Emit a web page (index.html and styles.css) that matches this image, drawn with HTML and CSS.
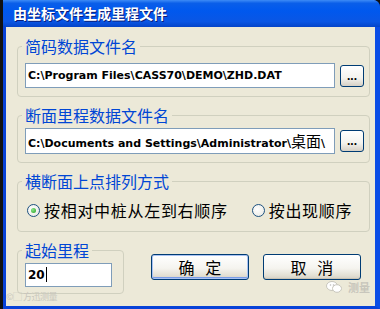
FILE: index.html
```html
<!DOCTYPE html>
<html lang="zh-CN">
<head>
  <meta charset="UTF-8" />
  <title>由坐标文件生成里程文件</title>
  <link rel="stylesheet" href="styles.css">
</head>
<body>

  <div class="window">
    <div class="titlebar">由坐标文件生成里程文件</div>

    <div class="content">
      <fieldset class="group g1">
        <legend>简码数据文件名</legend>
        <div class="file-row">
          <div class="field">C:\Program Files\CASS70\DEMO\ZHD.DAT</div>
          <button class="browse">...</button>
        </div>
      </fieldset>

      <fieldset class="group g2">
        <legend>断面里程数据文件名</legend>
        <div class="file-row">
          <div class="field">C:\Documents and Settings\Administrator\<span class="cjk">桌面</span>\</div>
          <button class="browse">...</button>
        </div>
      </fieldset>

      <fieldset class="group g3">
        <legend>横断面上点排列方式</legend>
        <div class="radios">
          <label class="radio-item"><span class="radio checked"></span>按相对中桩从左到右顺序</label>
          <label class="radio-item"><span class="radio"></span>按出现顺序</label>
        </div>
      </fieldset>

      <div class="bottom-row">
        <fieldset class="group g4">
          <legend>起始里程</legend>
          <div class="field short">20<span class="caret"></span></div>
        </fieldset>
        <button class="btn ok">确&nbsp;&nbsp;&nbsp;定</button>
        <button class="btn cancel">取&nbsp;&nbsp;&nbsp;消</button>
      </div>
    </div>

    <!-- watermarks -->
    <div class="wm-left">©▢ 方迅测量</div>
    <div class="wm-right">
      <svg width="16" height="12" viewBox="0 0 16 12">
        <ellipse cx="6" cy="5" rx="5.5" ry="4.5" fill="#fff" stroke="#c8c6bc" stroke-width="1"/>
        <ellipse cx="11" cy="7.5" rx="4.5" ry="3.8" fill="#fff" stroke="#c8c6bc" stroke-width="1"/>
        <circle cx="4.5" cy="4" r="0.8" fill="#bbb"/>
        <circle cx="7.5" cy="4" r="0.8" fill="#bbb"/>
      </svg>
      <span>测量</span>
    </div>
  </div>

</body>
</html>
```

FILE: styles.css
```css
* { box-sizing: border-box; }

body {
  margin: 0;
  background: #111;
  width: 380px;
  height: 309px;
  overflow: hidden;
}

.window {
  position: relative;
  margin-left: 3px;
  width: 377px;
  height: 309px;
  background: #ece9d8;
  border-left: 3px solid #0842d8;
  border-right: 5px solid #0a4de6;
  border-bottom: 3px solid #0842d8;
  border-top-right-radius: 7px;
  font-family: "Noto Sans CJK SC", "Liberation Sans", sans-serif;
}

.titlebar {
  height: 27px;
  margin-left: -3px;
  margin-right: -5px;
  padding-left: 10px;
  line-height: 27px;
  color: #fff;
  font-size: 14px;
  font-weight: bold;
  text-shadow: 1px 1px 0 #0a1e7a;
  border-top-right-radius: 7px;
  background: linear-gradient(to bottom, #3d8bf6 0%, #0a5ee9 12%, #0058ee 40%, #0a56e4 80%, #0544c8 100%);
}

.content {
  padding: 10px 0 0 11px;
}

.group {
  margin: 0;
  width: 353px;
  min-width: 0;
  padding: 8px 5px 8px 7px;
  border: 1px solid #d0d0bf;
  border-radius: 4px;
}

.group legend {
  margin-left: -3px;
  padding: 0 3px;
  font-size: 16px;
  line-height: 18px;
  color: #0046d5;
}

.g2 { margin-top: 9px; padding-top: 4px; }
.g3 { margin-top: 9px; padding-top: 11px; padding-bottom: 12px; }

.file-row {
  display: flex;
  align-items: center;
  gap: 5px;
}

.field {
  height: 25px;
  width: 310px;
  padding-left: 2px;
  background: #fff;
  border: 1px solid #7f9db9;
  font-family: "DejaVu Sans", "Noto Sans CJK SC", sans-serif;
  font-weight: bold;
  font-size: 11px;
  line-height: 23px;
  color: #000;
  white-space: nowrap;
  overflow: hidden;
}

.field .cjk {
  font-family: "Noto Sans CJK SC", sans-serif;
  font-weight: normal;
  font-size: 15px;
}

.g2 .field { height: 26px; line-height: 24px; }

.browse {
  width: 24px;
  height: 22px;
  padding: 0;
  border: 1px solid #003c74;
  border-radius: 3px;
  background: linear-gradient(to bottom, #ffffff 0%, #f4f3ee 60%, #d6d0c5 100%);
  font-family: "Liberation Sans", sans-serif;
  font-weight: bold;
  font-size: 12px;
  line-height: 14px;
  color: #000;
}

.radios {
  display: flex;
  height: 18px;
  align-items: center;
  gap: 24px;
}

.radio-item {
  display: flex;
  align-items: center;
  gap: 4px;
  font-size: 16px;
  line-height: 18px;
  letter-spacing: 0.7px;
  color: #000;
}

.radio-item:first-child { margin-left: 2px; }

.radio {
  width: 13px;
  height: 13px;
  border-radius: 50%;
  border: 1px solid #1c5180;
  background: radial-gradient(circle at 40% 40%, #ffffff 0%, #e6e6e0 100%);
  display: flex;
  align-items: center;
  justify-content: center;
}

.radio.checked::after {
  content: "";
  width: 5px;
  height: 5px;
  border-radius: 50%;
  background: radial-gradient(circle at 35% 35%, #8ee48a 0%, #21a121 100%);
}

.bottom-row {
  display: flex;
  align-items: flex-start;
  margin-top: 9px;
}

.g4 {
  width: 107px;
  padding-top: 4px;
  padding-bottom: 6px;
}

.field.short {
  width: 87px;
  height: 24px;
  line-height: 22px;
  font-size: 12px;
}

.caret {
  display: inline-block;
  width: 1px;
  height: 15px;
  margin-left: 1px;
  vertical-align: -3px;
  background: #000;
}

.btn {
  margin-top: 13px;
  width: 98px;
  height: 26px;
  padding: 0;
  border: 1px solid #003c74;
  border-radius: 3px;
  background: linear-gradient(to bottom, #ffffff 0%, #f5f4ef 55%, #e3e0d4 85%, #d6d0c5 100%);
  box-shadow: inset 0 -1px 0 #c9c3b4;
  font-family: "Noto Sans CJK SC", sans-serif;
  font-size: 16px;
  line-height: 22px;
  color: #000;
}

.btn.ok { margin-left: 27px; box-shadow: inset 0 0 0 1px #a9c2f2, inset 0 -2px 0 #7a9de8; }
.btn.cancel { margin-left: 14px; }

.wm-left {
  position: absolute;
  left: 0;
  bottom: 3px;
  font-size: 9px;
  color: #c8c6bc;
  letter-spacing: -0.5px;
}

.wm-right {
  position: absolute;
  right: 5px;
  bottom: 11px;
  display: flex;
  align-items: center;
  gap: 6px;
  font-size: 11px;
  font-weight: bold;
  color: #c8c6bc;
}
```
